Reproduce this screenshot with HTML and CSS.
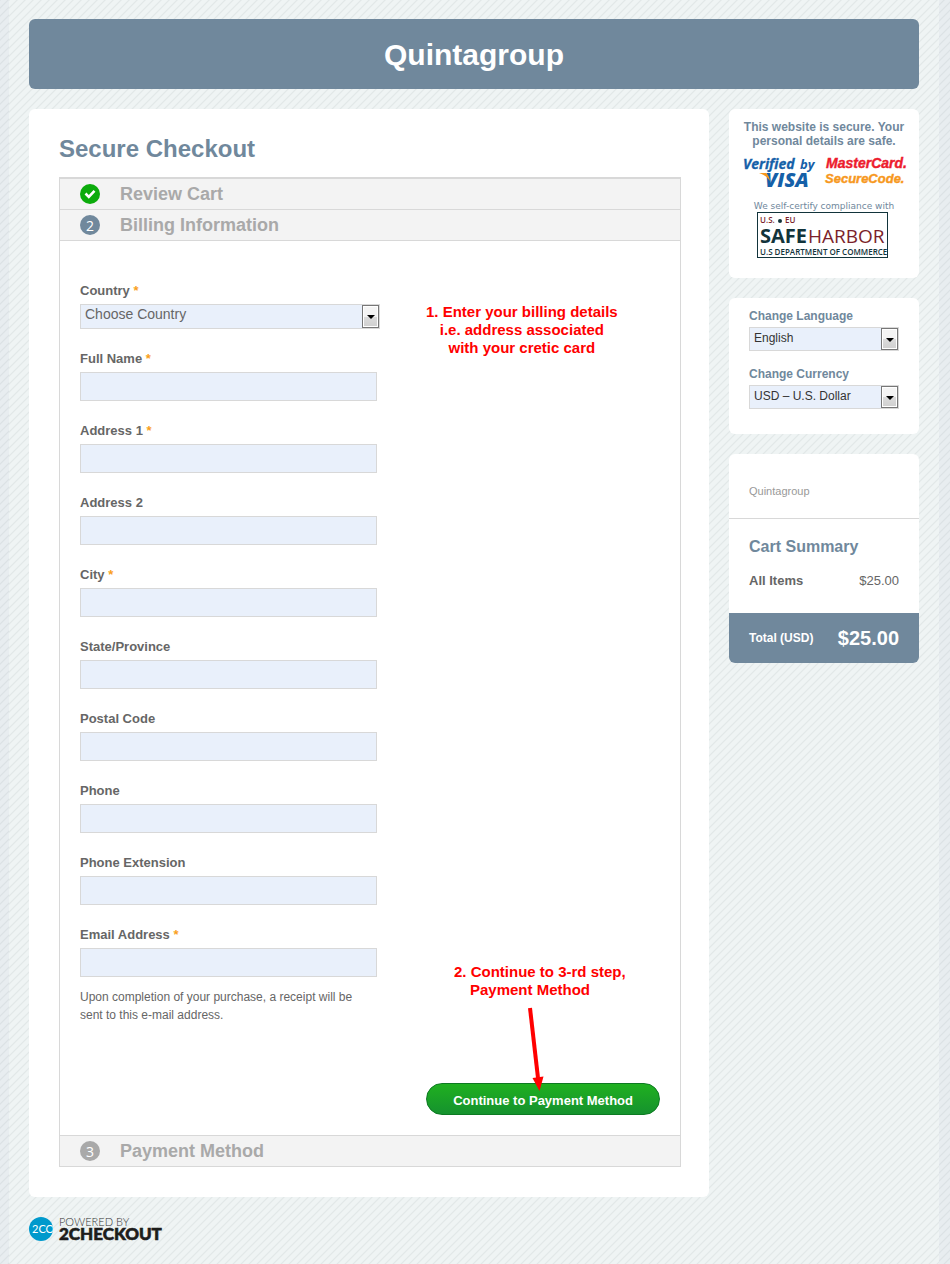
FILE: index.html
```html
<!DOCTYPE html>
<html lang="en">
<head>
    <meta charset="UTF-8">
    <meta name="viewport" content="width=device-width, initial-scale=1.0">
    <title>Quintagroup - Secure Checkout</title>
    <link rel="stylesheet" href="styles.css">
</head>
<body>
    <div class="page">
        <header class="header">
            <h1>Quintagroup</h1>
        </header>

        <div class="columns">
            <!-- Checkout steps -->
            <main class="card checkout">
                <h2>Secure Checkout</h2>
                <div class="steps">
                    <h3 class="step">
                        <span class="badge badge-done">
                            <svg width="12" height="10" viewBox="0 0 12 10"><path d="M1.5 4.5 L4.8 7.8 L10.5 1.8" fill="none" stroke="#fff" stroke-width="2.6"/></svg>
                        </span>
                        Review Cart
                    </h3>
                    <h3 class="step"><span class="badge badge-current">2</span>Billing Information</h3>

                    <form class="billing">
                        <div class="field">
                            <label for="country">Country <span class="required">*</span></label>
                            <div class="select select-country">
                                <select id="country"><option>Choose Country</option></select>
                            </div>
                        </div>
                        <div class="field">
                            <label for="name">Full Name <span class="required">*</span></label>
                            <input type="text" id="name">
                        </div>
                        <div class="field">
                            <label for="address1">Address 1 <span class="required">*</span></label>
                            <input type="text" id="address1">
                        </div>
                        <div class="field">
                            <label for="address2">Address 2</label>
                            <input type="text" id="address2">
                        </div>
                        <div class="field">
                            <label for="city">City <span class="required">*</span></label>
                            <input type="text" id="city">
                        </div>
                        <div class="field">
                            <label for="state">State/Province</label>
                            <input type="text" id="state">
                        </div>
                        <div class="field">
                            <label for="postal">Postal Code</label>
                            <input type="text" id="postal">
                        </div>
                        <div class="field">
                            <label for="phone">Phone</label>
                            <input type="tel" id="phone">
                        </div>
                        <div class="field">
                            <label for="extension">Phone Extension</label>
                            <input type="text" id="extension">
                        </div>
                        <div class="field">
                            <label for="email">Email Address <span class="required">*</span></label>
                            <input type="email" id="email">
                            <p class="hint">Upon completion of your purchase, a receipt will be sent to this e-mail address.</p>
                        </div>
                        <div class="actions">
                            <button type="button" class="btn">Continue to Payment Method</button>
                        </div>

                        <!-- Notes over the form -->
                        <p class="note note-billing">1. Enter your billing details<br>i.e. address associated<br>with your cretic card</p>
                        <p class="note note-continue">2. Continue to 3-rd step,<br>Payment Method</p>
                        <svg class="arrow" width="20" height="84" viewBox="0 0 20 84">
                            <path d="M5 1 L13 71" stroke="#f00" stroke-width="4"/>
                            <path d="M7.500 71 L18.500 69.500 L14.500 84 Z" fill="#f00"/>
                        </svg>
                    </form>

                    <h3 class="step"><span class="badge">3</span>Payment Method</h3>
                </div>
            </main>

            <aside class="sidebar">
                <!-- Security logos -->
                <div class="card secure">
                    <p class="secure-text">This website is secure. Your personal details are safe.</p>
                    <div class="logos">
                        <svg width="74" height="34" viewBox="0 0 74 34" font-family="Open Sans, sans-serif" font-style="italic" font-weight="bold" fill="#1560a8">
                            <text x="0" y="13" font-size="14" stroke="#1560a8" stroke-width="0.3">Verified</text>
                            <text x="57" y="13" font-size="13">by</text>
                            <text x="22" y="31" font-size="20" font-weight="800">VISA</text>
                            <path d="M16 17 H23 Q26 19 27 25 Q23 19 16 17 Z" fill="#f7981d"/>
                        </svg>
                        <svg width="80" height="34" viewBox="0 0 80 34" font-family="Liberation Sans, sans-serif" font-style="italic" font-weight="bold" font-size="14">
                            <text x="1" y="12" fill="#ed1c2e" stroke="#ed1c2e" stroke-width="0.4">MasterCard.</text>
                            <text x="0" y="27" font-size="13" fill="#f7981d" stroke="#f7981d" stroke-width="0.4">SecureCode.</text>
                        </svg>
                    </div>
                    <p class="certify">We self-certify compliance with</p>
                    <svg class="harbor" width="131" height="46" viewBox="0 0 131 46" font-family="Open Sans, sans-serif">
                        <rect x="0.500" y="0.500" width="130" height="45" fill="#fff" stroke="#12343b"/>
                        <text x="3" y="11" font-size="8" font-weight="600" fill="#7b1f2b">U.S.</text>
                        <circle cx="23" cy="9" r="2" fill="#12343b"/>
                        <text x="28" y="11" font-size="8" font-weight="600" fill="#7b1f2b">EU</text>
                        <text x="3" y="31" font-size="20" font-weight="bold" fill="#12343b">SAFE</text>
                        <text x="51" y="31" font-size="19" fill="#7b1f2b">HARBOR</text>
                        <text x="3" y="43" font-size="8" font-weight="600" fill="#12343b">U.S DEPARTMENT OF COMMERCE</text>
                    </svg>
                </div>

                <!-- Language and currency -->
                <form class="card settings">
                    <label for="language">Change Language</label>
                    <div class="select">
                        <select id="language"><option>English</option></select>
                    </div>
                    <label for="currency">Change Currency</label>
                    <div class="select">
                        <select id="currency"><option>USD – U.S. Dollar</option></select>
                    </div>
                </form>

                <!-- Cart summary -->
                <div class="card cart">
                    <p class="vendor">Quintagroup</p>
                    <div class="summary">
                        <h4>Cart Summary</h4>
                        <div class="row"><strong>All Items</strong><span>$25.00</span></div>
                    </div>
                    <div class="total"><span>Total (USD)</span><strong>$25.00</strong></div>
                </div>
            </aside>
        </div>

        <footer class="footer">
            <svg width="134" height="26" viewBox="0 0 134 26" font-family="Lato, sans-serif">
                <clipPath id="disc"><circle cx="12" cy="12" r="12"/></clipPath>
                <circle cx="12" cy="12" r="12" fill="#0099cc"/>
                <text x="3" y="16" font-size="11" fill="#fff" clip-path="url(#disc)">2CO</text>
                <text x="30" y="9" font-size="11" font-weight="300" fill="#333">POWERED BY</text>
                <text x="30" y="23" font-size="17" font-weight="900" fill="#1d1d1b" stroke="#1d1d1b" stroke-width="0.6">2CHECKOUT</text>
            </svg>
        </footer>
    </div>
</body>
</html>
```
FILE: styles.css
```css
* { margin: 0; padding: 0; box-sizing: border-box; }
body {
    font-family: "Liberation Sans", Arial, sans-serif;
    font-size: 13px;
    color: #666;
    background: linear-gradient(135deg, #dce2e5 2%, #e8edf0 10%, #e8edf0 42%, #dce2e5 49%, #dce2e5 52%, #e8edf0 60%, #e8edf0 92%, #dce2e5 99%) 0 0 / 8px 8px;
}
.page {
    min-height: 100vh;
    margin: 0 11px 0 9px;
    padding: 19px 20px 20px;
    background: linear-gradient(135deg, #e2e8e8 2%, #eff4f4 10%, #eff4f4 42%, #e2e8e8 49%, #e2e8e8 52%, #eff4f4 60%, #eff4f4 92%, #e2e8e8 99%) 0 0 / 8px 8px;
}
.header { padding: 18px 17px 16px; background: #70889c; border-radius: 6px; color: #fff; text-align: center; }
.header h1 { font-size: 30px; line-height: 36px; }
.columns { display: flex; align-items: flex-start; gap: 20px; margin-top: 20px; }
.card { background: #fff; border-radius: 6px; }

/* Checkout */
.checkout { flex: 1; padding: 24px 28px 30px 30px; }
.checkout h2 { font-size: 24px; line-height: 32px; margin-bottom: 12px; color: #70889c; }
.steps { border: 1px solid #d8d8d8; border-top-width: 2px; }
.step { display: flex; align-items: center; gap: 20px; height: 30px; padding-left: 20px; background: #f3f3f3; color: #a9a9a9; font-size: 18px; }
.step + .step { height: 32px; border: 1px solid #d8d8d8; border-width: 1px 0; }
.badge { display: flex; align-items: center; justify-content: center; width: 20px; height: 20px; border-radius: 50%; background: #a9a9a9; color: #fff; font: 14px "Open Sans", sans-serif; }
.badge-done { background: #0bab0b; }
.badge-current { background: #70889c; }

.billing { position: relative; padding: 41px 20px 20px; border-bottom: 1px solid #d8d8d8; }
.field { width: 300px; margin-bottom: 21px; }
.field label { display: block; padding-bottom: 4px; font-weight: bold; line-height: 18px; }
.required { color: #f9a01b; }
.field input { display: block; width: 297px; height: 29px; padding: 0 5px; background: #e9f0fb; border: 1px solid #d8d8d8; }
.hint { max-width: 290px; padding-top: 11px; font-size: 12px; line-height: 18px; }
.actions { margin-top: 59px; text-align: right; }
.btn { height: 32px; padding: 3px 26px 0; border: 1px solid #0d7a22; border-radius: 16px; background: linear-gradient(#20b020, #15922e); color: #fff; font: bold 13px "Liberation Sans", Arial, sans-serif; cursor: pointer; }

.select { position: relative; height: 24px; }
.select select { appearance: none; width: 100%; height: 100%; padding: 0 22px 2px 4px; border: 1px solid #d8d8d8; border-radius: 0; background: #e9f0fb; color: #333; font: 12px "Liberation Sans", Arial, sans-serif; }
.select::before { content: ""; box-sizing: border-box; position: absolute; top: 1px; right: 1px; bottom: 1px; width: 17px; border: 1px solid #777; background: linear-gradient(#f4f4f4 50%, #dcdcdc 50%, #cfcfcf); box-shadow: inset 0 0 0 1px #fff; pointer-events: none; }
.select::after { content: ""; position: absolute; top: 11px; right: 5px; border: 4px solid transparent; border-top-color: #000; border-bottom: 0; pointer-events: none; }
.select-country { height: 25px; }
.select-country select { padding-bottom: 5px; color: #666; font-size: 14px; }

.note { position: absolute; color: #f00; font-size: 15px; font-weight: bold; line-height: 18px; white-space: nowrap; }
.note-billing { top: 62px; left: 366px; text-align: center; }
.note-continue { top: 722px; left: 394px; padding-left: 16px; text-indent: -16px; }
.arrow { position: absolute; top: 766px; left: 465px; }

/* Sidebar */
.sidebar { display: flex; flex-direction: column; gap: 20px; width: 190px; }
.secure { padding: 11px 10px 20px; text-align: center; color: #70889c; }
.secure-text { font-size: 12px; font-weight: bold; line-height: 14px; }
.logos { display: flex; justify-content: center; gap: 8px; margin-top: 8px; }
.logos svg { overflow: visible; text-anchor: start; }
.certify { margin-top: 10px; font: 9px/12px "DejaVu Sans", sans-serif; white-space: nowrap; }
.harbor { display: block; margin: 0 auto 0 18px; }
.settings { padding: 10px 20px 25px; }
.settings label { display: block; padding-bottom: 3px; color: #70889c; font-size: 12px; font-weight: bold; line-height: 16px; }
.settings .select + label { margin-top: 15px; }
.vendor { padding: 30px 20px 19px; border-bottom: 1px solid #d8d8d8; color: #999; font-size: 11px; line-height: 15px; }
.summary { padding: 18px 20px 24px; }
.summary h4 { margin-bottom: 15px; color: #70889c; font-size: 16px; line-height: 20px; }
.row { display: flex; justify-content: space-between; line-height: 17px; }
.total { display: flex; align-items: center; justify-content: space-between; height: 50px; padding: 0 20px; background: #70889c; border-radius: 0 0 6px 6px; color: #fff; font-size: 12px; font-weight: bold; }
.total strong { font-size: 20px; }

.footer { margin-top: 20px; }
.footer svg { display: block; }
```
